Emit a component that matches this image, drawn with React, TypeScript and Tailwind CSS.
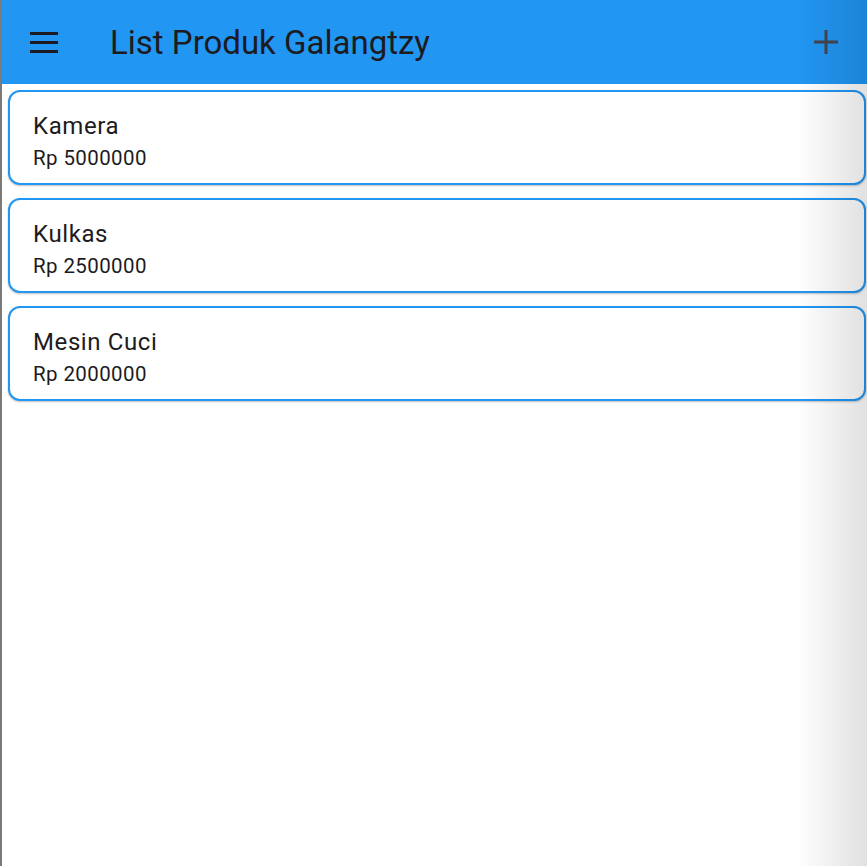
import React from "react";

const items = [
  { name: "Kamera", price: "Rp 5000000" },
  { name: "Kulkas", price: "Rp 2500000" },
  { name: "Mesin Cuci", price: "Rp 2000000" },
];

export default function App() {
  return (
    <div
      className="relative w-[867px] h-[866px] overflow-hidden bg-white flex"
      style={{ fontFamily: "Roboto, 'Noto Sans', sans-serif" }}
    >
      <div className="w-[2px] h-full bg-[#7a7a7a] shrink-0" />
      <div className="flex-1 flex flex-col">
        <header className="h-[84px] bg-[#2196F3] flex items-center shrink-0">
          <div className="w-[28px] ml-[28px] flex flex-col gap-[6px]">
            <div className="h-[3px] bg-[#1d1b20]" />
            <div className="h-[3px] bg-[#1d1b20]" />
            <div className="h-[3px] bg-[#1d1b20]" />
          </div>
          <h1 className="ml-[52px] text-[33px] text-[#1d1b20] leading-none">
            List Produk Galangtzy
          </h1>
          <div className="ml-auto mr-[29px] flex">
            <svg width="24" height="24" viewBox="0 0 24 24">
              <rect x="10.5" y="0" width="3" height="24" fill="#45464f" />
              <rect x="0" y="10.5" width="24" height="3" fill="#45464f" />
            </svg>
          </div>
        </header>
        <div className="flex flex-col gap-[13px] pt-[6px] pl-[6px] pr-[1px]">
          {items.map((it) => (
            <div
              key={it.name}
              className="h-[95px] rounded-[12px] border-2 border-[#2196F3] bg-white shadow-[0_1px_2px_rgba(0,0,0,0.25)] pl-[23px] pt-[17px] flex flex-col"
            >
              <div className="text-[24px] leading-[34px] text-[#1d1b20] tracking-[0.6px]">
                {it.name}
              </div>
              <div className="text-[20.5px] leading-[30px] text-[#1d1b20] tracking-[0.4px]">
                {it.price}
              </div>
            </div>
          ))}
        </div>
      </div>
      <div className="pointer-events-none absolute top-0 right-0 h-full w-[70px] bg-gradient-to-r from-transparent to-[rgba(0,0,0,0.12)]" />
    </div>
  );
}
